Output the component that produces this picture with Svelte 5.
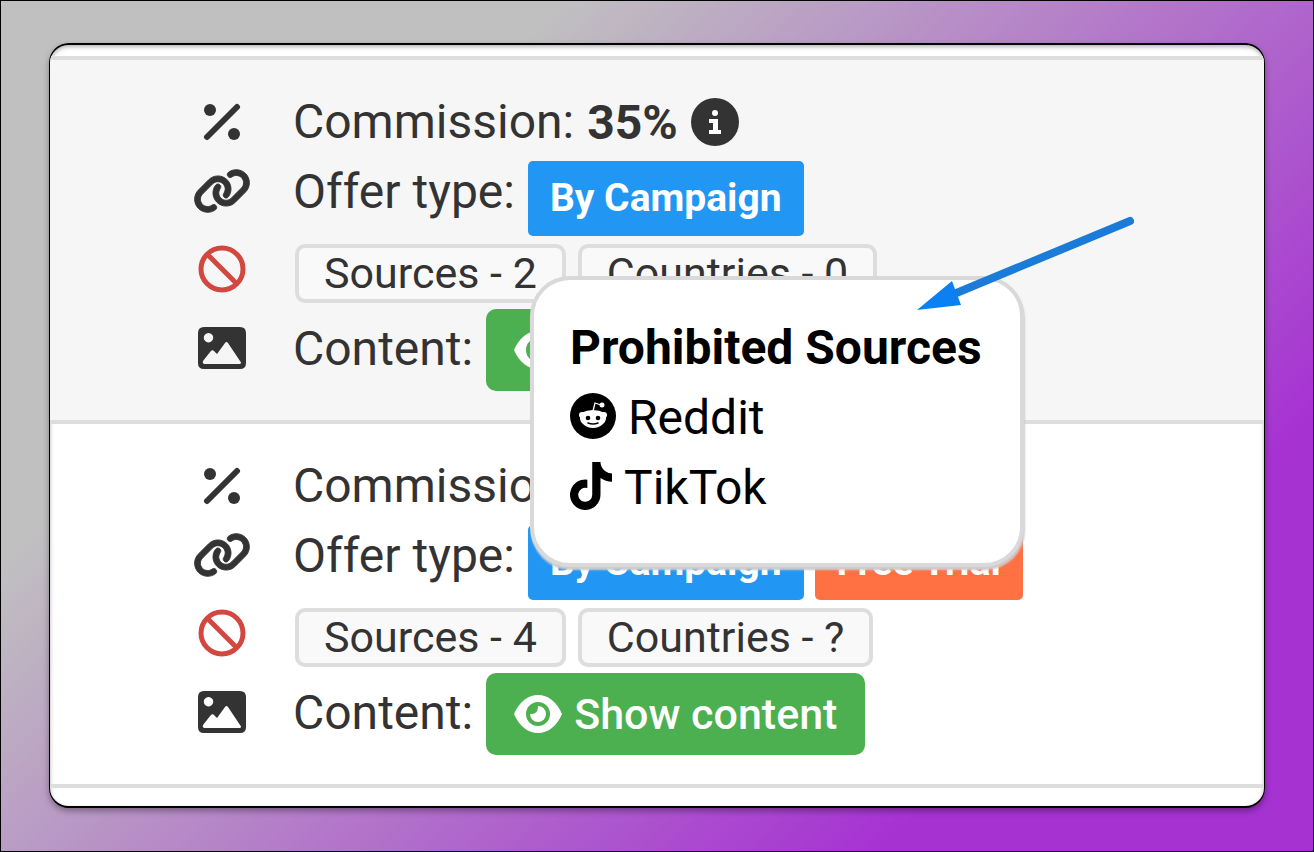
<script>
  let offers = [
    {
      shaded: true,
      commission: '35%',
      types: [{ label: 'By Campaign', color: 'blue' }],
      sources: '2',
      countries: '0',
      popup: true
    },
    {
      shaded: false,
      commission: '',
      types: [
        { label: 'By Campaign', color: 'blue' },
        { label: 'Free Trial', color: 'orange' }
      ],
      sources: '4',
      countries: '?',
      popup: false
    }
  ];
</script>

<main class="page">
  <div class="card">
    {#each offers as offer}
      <section class="offer" class:shaded={offer.shaded}>
        <div class="row">
          <span class="icon">
            <svg width="38" height="38" viewBox="0 0 38 38" aria-hidden="true">
              <circle cx="7" cy="7" r="6" />
              <circle cx="31" cy="31" r="6" />
              <path d="M34 4L4 34" stroke="currentColor" stroke-width="6" stroke-linecap="round" />
            </svg>
          </span>
          <span class="label">Commission:</span>
          {#if offer.commission}
            <strong>{offer.commission}</strong>
            <svg class="info" width="48" height="48" viewBox="0 0 48 48" aria-hidden="true">
              <circle cx="24" cy="24" r="24" />
              <circle cx="24" cy="15" r="3" fill="#fff" />
              <path d="M18 21h9v11h3v4H18v-4h4v-7h-4z" fill="#fff" />
            </svg>
          {/if}
        </div>

        <div class="row types">
          <span class="icon">
            <svg width="58" height="48" viewBox="0 0 640 512" aria-hidden="true">
              <path stroke="currentColor" stroke-width="10" d="M579.8 267.7c56.5-56.5 56.5-148 0-204.5c-50-50-128.8-56.5-186.3-15.4l-1.6 1.1c-14.4 10.3-17.7 30.3-7.4 44.6s30.3 17.7 44.6 7.4l1.6-1.1c32.1-22.9 76-19.3 103.8 8.6c31.5 31.5 31.5 82.5 0 114L422.3 334.8c-31.5 31.5-82.5 31.5-114 0c-27.9-27.9-31.5-71.8-8.6-103.8l1.1-1.6c10.3-14.4 6.9-34.4-7.4-44.6s-34.4-6.9-44.6 7.4l-1.1 1.6C206.5 251.2 213 330 263 380c56.5 56.5 148 56.5 204.5 0L579.8 267.7zM60.2 244.3c-56.5 56.5-56.5 148 0 204.5c50 50 128.8 56.5 186.3 15.4l1.6-1.1c14.4-10.3 17.7-30.3 7.4-44.6s-30.3-17.7-44.6-7.4l-1.6 1.1c-32.1 22.9-76 19.3-103.8-8.6C74 372 74 321 105.5 289.5L217.7 177.2c31.5-31.5 82.5-31.5 114 0c27.9 27.9 31.5 71.8 8.6 103.9l-1.1 1.6c-10.3 14.4-6.9 34.4 7.4 44.6s34.4 6.9 44.6-7.4l1.1-1.6C433.5 260.8 427 182 377 132c-56.5-56.5-148-56.5-204.5 0L60.2 244.3z" />
            </svg>
          </span>
          <span class="label">Offer type:</span>
          {#each offer.types as type}
            <span class="badge {type.color}">{type.label}</span>
          {/each}
        </div>

        <div class="row limits">
          <span class="icon ban">
            <svg width="48" height="48" viewBox="0 0 48 48" stroke="currentColor" stroke-width="5" aria-hidden="true">
              <circle cx="24" cy="24" r="21" />
              <path d="M9 9L39 39" />
            </svg>
          </span>
          <div class="chips">
            <button type="button" class="chip">Sources - {offer.sources}</button>
            <button type="button" class="chip">Countries - {offer.countries}</button>

            {#if offer.popup}
              <div class="popup">
                <h2>Prohibited Sources</h2>
                <p>
                  <svg width="46" height="46" viewBox="0 0 46 46" aria-hidden="true">
                    <circle cx="23" cy="23" r="23" />
                    <g fill="#fff">
                      <circle cx="12" cy="22" r="3" />
                      <circle cx="34" cy="22" r="3" />
                      <path d="M11 20Q17 17 23 17T35 20Q38 27 33 31Q29 35 23 35T13 31Q8 27 11 20Z" />
                      <circle cx="32" cy="12" r="2.5" />
                    </g>
                    <path d="M23 18L25 10L31 12" fill="none" stroke="#fff" stroke-width="1.3" />
                    <circle cx="18" cy="25" r="2.3" />
                    <circle cx="28" cy="25" r="2.3" />
                    <path d="M18 30q5 2 10 0" fill="none" stroke="#000" stroke-width="1.5" stroke-linecap="round" />
                  </svg>
                  Reddit
                </p>
                <p>
                  <svg width="42" height="48" viewBox="0 0 448 512" aria-hidden="true">
                    <path d="M448,209.91a210.06,210.06,0,0,1-122.77-39.25V349.38A162.55,162.55,0,1,1,185,188.31V278.2a74.62,74.62,0,1,0,52.23,71.18V0l88,0a121.18,121.18,0,0,0,1.86,22.17h0A122.18,122.18,0,0,0,381,102.39a121.43,121.43,0,0,0,67,20.14Z" />
                  </svg>
                  TikTok
                </p>
                <svg class="arrow" width="220" height="100" viewBox="0 0 220 100" aria-hidden="true">
                  <path d="M40 80L216 7" stroke="#1b7bd8" stroke-width="8" stroke-linecap="round" />
                  <path d="M3 96L38 67L47 91Z" fill="#0b80f2" />
                </svg>
              </div>
            {/if}
          </div>
        </div>

        <div class="row content">
          <span class="icon">
            <svg width="48" height="42" viewBox="0 0 48 42" aria-hidden="true">
              <path fill-rule="evenodd" d="M6 0H42Q48 0 48 6V36Q48 42 42 42H6Q0 42 0 36V6Q0 0 6 0ZM10.5 6a4.7 4.7 0 1 0 .01 0ZM6 37H42Q44 36 42 34L30 16Q28.5 14 27 16L19 27L15.5 23.5Q14 22.5 12.5 24.5L5 34Q4 36 6 37Z" />
            </svg>
          </span>
          <span class="label">Content:</span>
          <button type="button" class="show">
            <svg width="48" height="38" viewBox="0 0 48 38" aria-hidden="true">
              <path d="M0 19C5 7 14 0 24 0S43 7 48 19C43 31 34 38 24 38S5 31 0 19Z" />
              <circle cx="24" cy="19" r="12" fill="#4caf50" />
              <path d="M24 11a8 8 0 1 1-8 8q8 1 8-8Z" />
            </svg>
            Show content
          </button>
        </div>
      </section>
    {/each}
  </div>
</main>

<style>
  :global(body) {
    margin: 0;
  }

  .page {
    box-sizing: border-box;
    min-height: 100vh;
    padding: 42px 48px;
    border: 1px solid #000;
    background: linear-gradient(135deg, #c0c0c0 26%, #a632d2 80%);
    font-family: Roboto, "Liberation Sans", sans-serif;
    font-size: 48px;
    color: #333;
  }

  .card {
    padding: 11px 0 18px;
    border: 1px solid #000;
    border-width: 2px 1px;
    border-radius: 20px;
    background: #fff;
    overflow: hidden;
    box-shadow: 0 3px 6px rgba(0, 0, 0, 0.35), inset 0 2px 4px rgba(0, 0, 0, 0.3);
  }

  .offer {
    padding: 27px 0 27px 142px;
    border-top: 4px solid #ddd;
  }

  .offer:last-child {
    border-bottom: 4px solid #ddd;
  }

  .shaded {
    background: #f6f6f6;
  }

  svg {
    display: block;
    flex: none;
    fill: currentColor;
  }

  .row {
    display: flex;
    align-items: center;
    height: 70px;
    white-space: nowrap;
  }

  .icon {
    display: flex;
    flex: none;
    align-items: center;
    justify-content: center;
    width: 60px;
    height: 60px;
    margin-right: 41px;
  }

  .label {
    margin-right: 13px;
    line-height: 62px;
  }

  .info {
    margin-left: 13px;
  }

  .row.types {
    box-sizing: border-box;
    align-items: flex-start;
    height: 83px;
    padding-top: 4px;
  }

  .badge {
    margin-right: 11px;
    padding: 0 22px;
    border-radius: 5px;
    color: #fff;
    font-size: 39px;
    font-weight: 700;
    line-height: 75px;
  }

  .blue {
    background: #2196f3;
  }

  .orange {
    background: #ff7043;
  }

  .row.limits {
    box-sizing: border-box;
    align-items: flex-start;
    height: 67px;
    padding-top: 4px;
  }

  .icon.ban {
    height: 50px;
    color: #d2473f;
  }

  .ban svg {
    fill: none;
  }

  .chips {
    position: relative;
    display: flex;
    gap: 12px;
    margin-left: 2px;
  }

  button {
    border: none;
    font-family: inherit;
    cursor: pointer;
  }

  .chip {
    padding: 0 25px;
    border: 4px solid #ddd;
    border-radius: 10px;
    background: #f9f9f9;
    color: #333;
    font-size: 43px;
    line-height: 51px;
  }

  .row.content {
    box-sizing: border-box;
    align-items: flex-start;
    height: 86px;
    padding-top: 2px;
  }

  .content .icon {
    height: 78px;
  }

  .content .label {
    line-height: 80px;
  }

  .show {
    display: flex;
    align-items: center;
    gap: 12px;
    height: 82px;
    padding: 0 28px;
    border-radius: 10px;
    background: #4caf50;
    color: #fff;
    font-size: 43px;
    font-weight: 500;
  }

  .popup {
    position: absolute;
    top: 32px;
    left: 235px;
    z-index: 2;
    padding: 33px 38px 40px 36px;
    border: 4px solid #d9d9d9;
    border-radius: 40px;
    background: #fff;
    box-shadow: 1px 3px 2px #ccc;
    color: #000;
  }

  .popup h2,
  .popup p {
    display: flex;
    align-items: center;
    gap: 12px;
    margin: 0;
    font-size: 48px;
    line-height: 70px;
  }

  .popup p svg {
    margin-bottom: 4px;
  }

  .arrow {
    position: absolute;
    top: -66px;
    left: 380px;
  }
</style>
